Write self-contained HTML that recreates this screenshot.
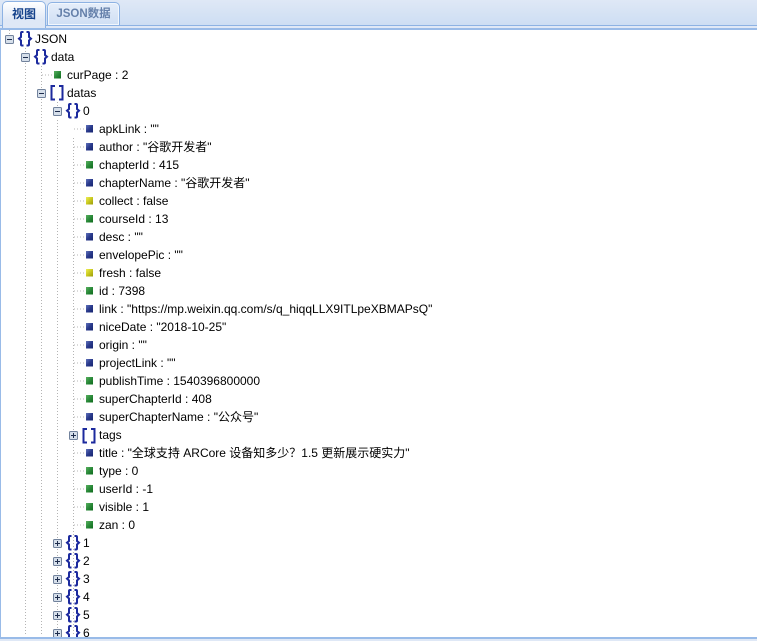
<!DOCTYPE html>
<html><head><meta charset="utf-8"><style>
html,body{margin:0;padding:0;background:#fff;width:757px;height:641px;overflow:hidden}
#p{position:relative;width:757px;height:641px;overflow:hidden;font:12px/18px "Liberation Sans","Noto Sans CJK SC",sans-serif;color:#000}
.h{position:absolute;left:0;top:0;width:757px;height:25px;background:linear-gradient(#dfe8f6,#cddef3)}
.l1{position:absolute;left:0;top:25px;width:757px;height:1px;background:#8db2e3}
.l2{position:absolute;left:0;top:26px;width:757px;height:2px;background:#dfe8f6}
.l3{position:absolute;left:0;top:28px;width:757px;height:2px;background:#99bbe8}
.tab{position:absolute;box-sizing:border-box;border:1px solid #8db2e3;border-bottom:0;border-radius:5px 5px 0 0;text-align:center;font-weight:bold;color:#15428b;line-height:24px;font-size:12px}
.a{left:2px;top:1px;width:44px;height:27px;background:linear-gradient(#fff,#dfe8f6 70%);z-index:2}
.b{left:47px;top:2px;width:73px;height:23px;font-size:11.5px;font-weight:bold;color:#6580aa;background:linear-gradient(#e6eefa,#cfdff4);box-shadow:inset 0 0 0 1px #f2f7fd;line-height:23px}
.t{position:absolute;white-space:nowrap;margin-top:1px}
.lb{position:absolute;left:0;top:28px;width:1px;height:609px;background:#99bbe8}
.fb{position:absolute;left:0;top:637px;width:757px;height:2px;background:#99bbe8}
.ff{position:absolute;left:0;top:639px;width:757px;height:2px;background:#dfe8f6}
svg{position:absolute;left:0;top:0}
</style></head><body><div id="p">
<div class="h"></div><div class="l1"></div><div class="l2"></div><div class="l3"></div>
<div class="tab a">视图</div><div class="tab b">JSON数据</div>
<div class="lb"></div>
<svg width="757" height="641" viewBox="0 0 757 641">
<defs>
<linearGradient id="gb" x1="0" y1="0" x2="1" y2="1"><stop offset="0" stop-color="#5f72bb"/><stop offset=".5" stop-color="#2a3a8c"/><stop offset="1" stop-color="#16256f"/></linearGradient>
<linearGradient id="gg" x1="0" y1="0" x2="1" y2="1"><stop offset="0" stop-color="#58b05f"/><stop offset=".5" stop-color="#2b8a3a"/><stop offset="1" stop-color="#0e6b1c"/></linearGradient>
<linearGradient id="gy" x1="0" y1="0" x2="1" y2="1"><stop offset="0" stop-color="#eeee55"/><stop offset=".5" stop-color="#c9c920"/><stop offset="1" stop-color="#9a9a08"/></linearGradient>
<g id="tb"><rect x=".5" y=".5" width="8" height="8" rx="1" fill="#d6dfea" stroke="#71829c"/><path d="M2 4.5h5" stroke="#1d2c4c" fill="none"/></g>
<g id="tp"><rect x=".5" y=".5" width="8" height="8" rx="1" fill="#d6dfea" stroke="#71829c"/><path d="M2 4.5h5M4.5 2v5" stroke="#1d2c4c" fill="none"/></g>
<path id="br" d="M5.5 1H4Q3 1 3 2V6L1 7.7L3 9.5V13.5Q3 14.5 4 14.5H5.5M8.5 1H10Q11 1 11 2V6L13 7.7L11 9.5V13.5Q11 14.5 10 14.5H8.5" fill="none" stroke="#1c2a9e" stroke-width="2"/>
<path id="sq" d="M5 1H1.5V14.5H5M9 1H12.5V14.5H9" fill="none" stroke="#1c2a9e" stroke-width="2"/>
<rect id="lb" y="-1" width="7" height="7.5" fill="url(#gb)"/>
<rect id="lg" y="-1" width="7" height="7.5" fill="url(#gg)"/>
<rect id="ly" y="-1" width="7" height="7.5" fill="url(#gy)"/>
</defs>
<g stroke="#b4b4b4" stroke-dasharray="1 2" fill="none">
<path d="M9.5 30V35M25.5 48V636M41.5 66V636M57.5 102V107M57.5 120V636M73.5 138V636"/>
<path d="M42 75H53M74 129H85M74 147H85M74 165H85M74 183H85M74 201H85M74 219H85M74 237H85M74 255H85M74 273H85M74 291H85M74 309H85M74 327H85M74 345H85M74 363H85M74 381H85M74 399H85M74 417H85M74 453H85M74 471H85M74 489H85M74 507H85M74 525H85"/>
</g>
<use href="#tb" x="5" y="35"/><use href="#br" x="18" y="31"/>
<use href="#tb" x="21" y="53"/><use href="#br" x="34" y="49"/>
<use href="#lg" x="54" y="72"/>
<use href="#tb" x="37" y="89"/><use href="#sq" x="50" y="85"/>
<use href="#tb" x="53" y="107"/><use href="#br" x="66" y="103"/>
<use href="#lb" x="86" y="126"/><use href="#lb" x="86" y="144"/><use href="#lg" x="86" y="162"/><use href="#lb" x="86" y="180"/><use href="#ly" x="86" y="198"/><use href="#lg" x="86" y="216"/><use href="#lb" x="86" y="234"/><use href="#lb" x="86" y="252"/><use href="#ly" x="86" y="270"/><use href="#lg" x="86" y="288"/><use href="#lb" x="86" y="306"/><use href="#lb" x="86" y="324"/><use href="#lb" x="86" y="342"/><use href="#lb" x="86" y="360"/><use href="#lg" x="86" y="378"/><use href="#lg" x="86" y="396"/><use href="#lb" x="86" y="414"/>
<use href="#tp" x="69" y="431"/><use href="#sq" x="82" y="428"/>
<use href="#lb" x="86" y="450"/><use href="#lg" x="86" y="468"/><use href="#lg" x="86" y="486"/><use href="#lg" x="86" y="504"/><use href="#lg" x="86" y="522"/>
<use href="#tp" x="53" y="539"/><use href="#br" x="66" y="535"/>
<use href="#tp" x="53" y="557"/><use href="#br" x="66" y="553"/>
<use href="#tp" x="53" y="575"/><use href="#br" x="66" y="571"/>
<use href="#tp" x="53" y="593"/><use href="#br" x="66" y="589"/>
<use href="#tp" x="53" y="611"/><use href="#br" x="66" y="607"/>
<use href="#tp" x="53" y="629"/><use href="#br" x="66" y="625"/>
</svg>
<div class="t" style="left:35px;top:29px">JSON</div>
<div class="t" style="left:51px;top:47px">data</div>
<div class="t" style="left:67px;top:65px">curPage : 2</div>
<div class="t" style="left:67px;top:83px">datas</div>
<div class="t" style="left:83px;top:101px">0</div>
<div class="t" style="left:99px;top:119px">apkLink : ""</div>
<div class="t" style="left:99px;top:137px">author : "谷歌开发者"</div>
<div class="t" style="left:99px;top:155px">chapterId : 415</div>
<div class="t" style="left:99px;top:173px">chapterName : "谷歌开发者"</div>
<div class="t" style="left:99px;top:191px">collect : false</div>
<div class="t" style="left:99px;top:209px">courseId : 13</div>
<div class="t" style="left:99px;top:227px">desc : ""</div>
<div class="t" style="left:99px;top:245px">envelopePic : ""</div>
<div class="t" style="left:99px;top:263px">fresh : false</div>
<div class="t" style="left:99px;top:281px">id : 7398</div>
<div class="t" style="left:99px;top:299px">link : "https://mp.weixin.qq.com/s/q_hiqqLLX9ITLpeXBMAPsQ"</div>
<div class="t" style="left:99px;top:317px">niceDate : "2018-10-25"</div>
<div class="t" style="left:99px;top:335px">origin : ""</div>
<div class="t" style="left:99px;top:353px">projectLink : ""</div>
<div class="t" style="left:99px;top:371px">publishTime : 1540396800000</div>
<div class="t" style="left:99px;top:389px">superChapterId : 408</div>
<div class="t" style="left:99px;top:407px">superChapterName : "公众号"</div>
<div class="t" style="left:99px;top:425px">tags</div>
<div class="t" style="left:99px;top:443px">title : "全球支持 ARCore 设备知多少？1.5 更新展示硬实力"</div>
<div class="t" style="left:99px;top:461px">type : 0</div>
<div class="t" style="left:99px;top:479px">userId : -1</div>
<div class="t" style="left:99px;top:497px">visible : 1</div>
<div class="t" style="left:99px;top:515px">zan : 0</div>
<div class="t" style="left:83px;top:533px">1</div>
<div class="t" style="left:83px;top:551px">2</div>
<div class="t" style="left:83px;top:569px">3</div>
<div class="t" style="left:83px;top:587px">4</div>
<div class="t" style="left:83px;top:605px">5</div>
<div class="t" style="left:83px;top:623px">6</div>
<div class="fb"></div><div class="ff"></div>
</div></body></html>
